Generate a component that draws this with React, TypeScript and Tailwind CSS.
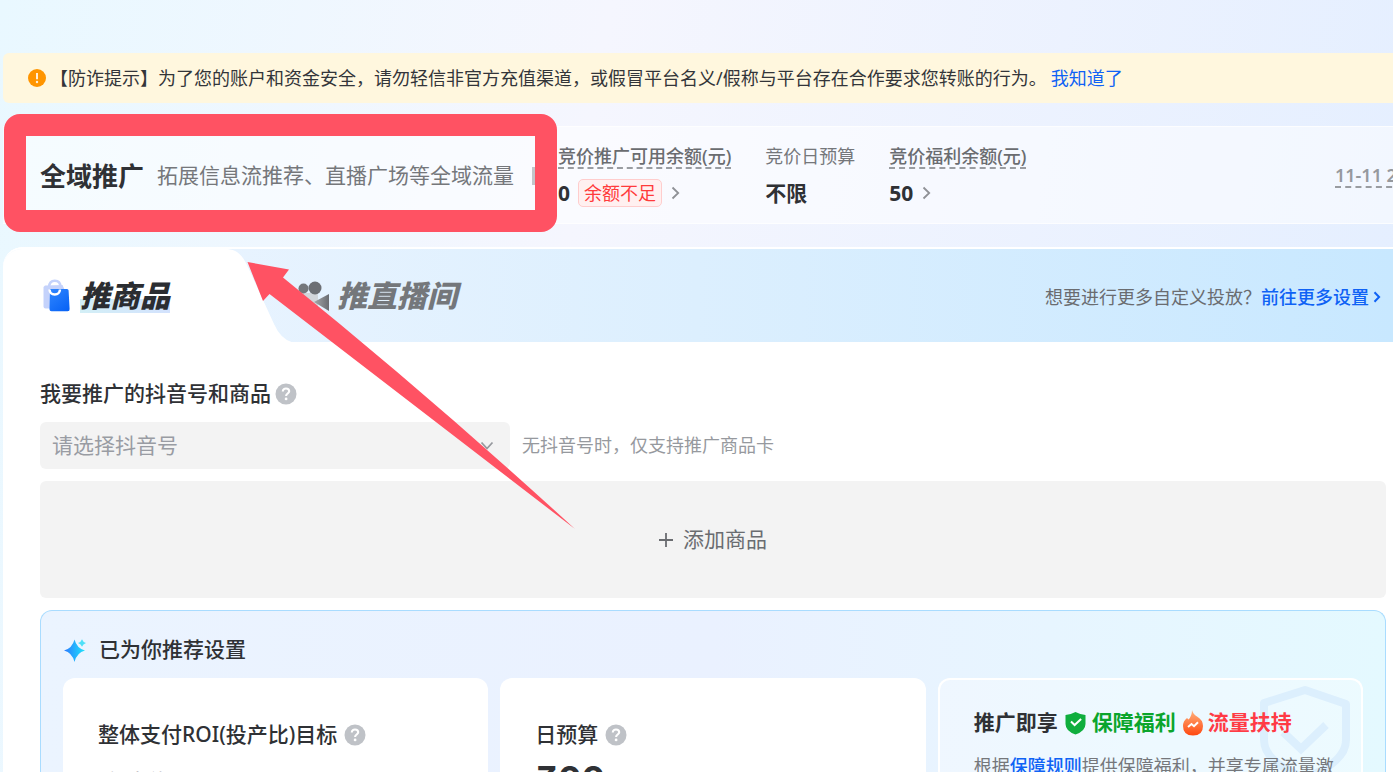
import React from 'react';

function HelpIcon({ label }: { label: string }) {
  return (
    <button type="button" aria-label={label} className="shrink-0">
      <svg width="22" height="22" viewBox="0 0 22 22" fill="none">
        <circle cx="11" cy="11" r="10.5" fill="#bfc2c7" />
        <path d="M7.8 8.6c0-1.9 1.4-3.1 3.2-3.1s3.2 1.1 3.2 2.8c0 2.1-3.1 2.3-3.1 4.6" stroke="#fff" strokeWidth="2.1" />
        <circle cx="11.1" cy="15.9" r="1.4" fill="#fff" />
      </svg>
    </button>
  );
}

function Chevron({ className }: { className?: string }) {
  return (
    <svg className={className} width="9" height="14" viewBox="0 0 9 14" fill="none">
      <path d="M1.5 1.5 7.2 7l-5.7 5.5" stroke="currentColor" strokeWidth="1.8" />
    </svg>
  );
}

function Notice() {
  return (
    <div role="alert" className="flex h-[50px] shrink-0 items-center whitespace-nowrap rounded-l-md bg-[#fff7de] pl-[25px] text-[18px] text-[#333539]">
      <svg className="mr-1 shrink-0" width="18" height="18" viewBox="0 0 18 18">
        <circle cx="9" cy="9" r="9" fill="#ff9500" />
        <path d="M9 4v6.2" stroke="#fff" strokeOpacity=".85" strokeWidth="2" />
        <circle cx="9" cy="13" r="1.2" fill="#fff" fillOpacity=".85" />
      </svg>
      <p>【防诈提示】为了您的账户和资金安全，请勿轻信非官方充值渠道，或假冒平台名义/假称与平台存在合作要求您转账的行为。</p>
      <button type="button" className="ml-1 text-[#0f62f5]">我知道了</button>
    </div>
  );
}

function Summary() {
  return (
    <header className="relative flex h-[98px] shrink-0 items-center whitespace-nowrap border-y border-white/70 bg-white/50 pl-[37px] pt-[2px]">
      <h1 className="text-[26px] font-bold text-[#2f3135]">全域推广</h1>
      <p className="ml-[13px] text-[21px] text-[#75777b]">拓展信息流推荐、直播广场等全域流量</p>
      <span className="ml-[18px] h-[18px] w-[3px] bg-[#c3c5c9]" />
      <dl className="ml-[23px] flex gap-[34px]">
        <div>
          <dt className="h-[24px] border-b-2 border-dashed border-[#999ca1] text-[18px] font-medium leading-[22px] text-[#6a6c70]">竞价推广可用余额(元)</dt>
          <dd className="mt-[10px] flex h-[28px] items-center text-[21px] font-bold leading-[28px] text-[#2f3135]">
            0
            <span className="ml-[8px] flex h-[28px] items-center rounded-[5px] border border-[#ffcdcd] bg-[#fff0f0] px-[5px] text-[18px] font-normal text-[#ff3b3b]">余额不足</span>
            <Chevron className="ml-[9px] text-[#8f9196]" />
          </dd>
        </div>
        <div>
          <dt className="h-[24px] text-[18px] leading-[22px] text-[#75777b]">竞价日预算</dt>
          <dd className="mt-[10px] h-[28px] text-[21px] font-bold leading-[28px] text-[#2f3135]">不限</dd>
        </div>
        <div>
          <dt className="h-[24px] border-b-2 border-dashed border-[#999ca1] text-[18px] font-medium leading-[22px] text-[#6a6c70]">竞价福利余额(元)</dt>
          <dd className="mt-[10px] flex h-[28px] items-center text-[21px] font-bold leading-[28px] text-[#2f3135]">
            50
            <Chevron className="ml-[9px] text-[#8f9196]" />
          </dd>
        </div>
      </dl>
      <div className="ml-auto w-[58px] shrink-0 overflow-hidden">
        <time className="block w-max border-b-2 border-dashed border-[#999ca1] text-[18px] font-semibold leading-[22px] text-[#96999e]">11-11 23:59</time>
      </div>
      <div className="absolute -top-[13px] left-px h-[118px] w-[553px] rounded-2xl border-[22px] border-[#ff5263]" />
    </header>
  );
}

function BagIcon() {
  return (
    <svg width="27" height="33" viewBox="0 0 27 33" fill="none">
      <defs>
        <linearGradient id="bag" x1="7" y1="10" x2="25" y2="32" gradientUnits="userSpaceOnUse">
          <stop stopColor="#2f86ff" />
          <stop offset="1" stopColor="#0762f5" />
        </linearGradient>
      </defs>
      <path d="M2 6.500 19.500 6l2 4.500L8 11v18.500H2.500A2 2 0 0 1 .5 27.500V8z" fill="#c4d2fb" />
      <path d="M6 8.500C6 4 8.300 1.800 11.800 1.800S17.500 4 17.500 8.500" stroke="#c4d2fb" strokeWidth="2.600" />
      <path d="M7 10h17a1.600 1.600 0 0 1 1.600 1.500l1 18.500a2 2 0 0 1-2 2.200H8.500a2 2 0 0 1-2-2z" fill="url(#bag)" />
      <path d="M6.500 10.500c.3 3.700 2.300 5 5.200 5s5-1.600 5.300-5" stroke="#fff" strokeWidth="2.500" />
    </svg>
  );
}

function CameraIcon() {
  return (
    <svg width="36" height="32" viewBox="0 0 36 32" fill="none">
      <defs>
        <linearGradient id="lens" x1="20" y1="0" x2="36" y2="0" gradientUnits="userSpaceOnUse">
          <stop stopColor="#a5a7aa" />
          <stop offset="1" stopColor="#66696e" />
        </linearGradient>
      </defs>
      <rect x="4" y="13" width="20" height="17" rx="3" fill="#d2d6db" />
      <circle cx="9.500" cy="8.500" r="5" fill="#74777b" />
      <circle cx="21" cy="8" r="6.500" fill="#6c6f74" />
      <path d="M20 22 35 14v17z" fill="url(#lens)" />
    </svg>
  );
}

function Tabs() {
  return (
    <div className="relative flex h-[95px] items-center overflow-hidden whitespace-nowrap rounded-tl-[20px] border-t-2 border-white bg-linear-to-r from-[#edf5ff] via-[#dceffe] to-[#c8e8ff]">
      <svg className="absolute left-0 top-0" width="300" height="94" viewBox="0 0 300 94">
        <path d="M0 0H222C234 0 239 6 244 16L271 75Q279 93 294 94H0Z" fill="#fff" />
      </svg>
      <div role="tablist" className="relative flex items-center pl-[40px]">
        <button type="button" role="tab" aria-selected="true" className="flex w-[251px] items-center gap-[10px]">
          <BagIcon />
          <span className="bg-linear-to-r from-[#d3eff6] to-[#d3e2fd] bg-[length:100%_14px] bg-bottom bg-no-repeat text-[30px] font-black italic leading-[34px] text-[#2b2d31]">推商品</span>
        </button>
        <button type="button" role="tab" aria-selected="false" className="flex items-center gap-[7px]">
          <CameraIcon />
          <span className="text-[30px] font-black italic leading-[34px] text-[#74777b]">推直播间</span>
        </button>
      </div>
      <p className="ml-auto flex items-center pr-[12px] pt-[3px] text-[18px] text-[#6a6c70]">
        想要进行更多自定义投放？
        <a href="#more" className="flex items-center font-medium text-[#0f62f5]">
          前往更多设置
          <svg className="ml-1" width="8" height="12" viewBox="0 0 8 12" fill="none">
            <path d="m1.500 1.200 4.600 4.800-4.600 4.800" stroke="currentColor" strokeWidth="2" />
          </svg>
        </a>
      </p>
    </div>
  );
}

function Sparkle() {
  return (
    <svg width="24" height="26" viewBox="0 0 24 26">
      <defs>
        <linearGradient id="spark" x1="2" y1="0" x2="22" y2="0" gradientUnits="userSpaceOnUse">
          <stop stopColor="#2a7fff" />
          <stop offset="1" stopColor="#1fe4fb" />
        </linearGradient>
      </defs>
      <path d="M11.500 2.500Q13.700 11.300 22 13.500 13.700 15.700 11.500 25 9.300 15.700 1 13.500 9.300 11.300 11.500 2.500Z" fill="url(#spark)" />
      <path d="M19 2.200Q19.900 5 23 6 19.900 7 19 9.800 18.100 7 15 6 18.100 5 19 2.200Z" fill="#4fe0f8" />
    </svg>
  );
}

function Benefits() {
  return (
    <section className="relative overflow-hidden rounded-t-xl border-2 border-b-0 border-white bg-white/30 pl-[34px] pr-6 pt-[29px]">
      <svg className="absolute right-[10px] top-[4px]" width="92" height="100" viewBox="0 0 92 100" fill="none">
        <path d="M5 19 46 6l41 14v36q0 22-41 38Q5 78 5 56Z" stroke="#dceffd" strokeWidth="8" strokeLinejoin="round" />
        <path d="m24 48 18 17 25-24" stroke="#dceffd" strokeWidth="8" />
      </svg>
      <h3 className="relative flex h-[28px] items-center whitespace-nowrap text-[21px] font-bold text-[#2f3135]">
        推广即享
        <svg className="ml-[7px] mr-[6px]" width="21" height="24" viewBox="0 0 21 24" fill="none">
          <path d="M10.500 1Q15 3.500 20.500 4v9q0 7-10 10.500Q.5 20 .5 13V4Q6 3.500 10.500 1Z" fill="#0fae3d" />
          <path d="m6 10.500 3.600 3.500 6.500-6" stroke="#fff" strokeWidth="2" />
        </svg>
        <span className="text-[#0ba52c]">保障福利</span>
        <svg className="ml-[7px] mr-[5px]" width="20" height="26" viewBox="0 0 20 26" fill="none">
          <defs>
            <linearGradient id="flame" x1="10" y1="1" x2="10" y2="25" gradientUnits="userSpaceOnUse">
              <stop stopColor="#ffb07a" />
              <stop offset="1" stopColor="#ff4a12" />
            </linearGradient>
          </defs>
          <path d="M9 0q1 4 5 6.500Q20 10 20 16q0 9.500-10 9.500T0 16q0-5 4-8l1.500 1.500Q9 6 9 0Z" fill="url(#flame)" />
          <path d="m5 17 3.500-3 2.500 2.200 4-4" stroke="#fff" strokeWidth="2" />
        </svg>
        <span className="text-[#ff3b45]">流量扶持</span>
      </h3>
      <p className="relative mt-[15px] text-[18px] leading-[28px] text-[#75777b]">
        根据<a href="#rules" className="font-medium text-[#0f62f5]">保障规则</a>提供保障福利，并享专属流量激励
      </p>
    </section>
  );
}

function Recommended() {
  return (
    <section className="mt-3 flex flex-1 flex-col rounded-t-xl border border-b-0 border-[#a9dcff] bg-linear-to-r from-[#ebf4ff] via-[#eaf1ff] to-[#e4f9ff] px-[22px] pt-[24px]">
      <h2 className="flex h-[30px] items-center gap-[12px] text-[21px] font-medium text-[#2f3135]">
        <Sparkle />
        已为你推荐设置
      </h2>
      <div className="mt-[13px] grid flex-1 grid-cols-3 gap-3">
        <section className="rounded-t-xl bg-white px-[35px] pt-[43px]">
          <h3 className="flex h-[28px] items-center gap-[7px] whitespace-nowrap text-[21px] font-medium text-[#2f3135]">
            整体支付ROI(投产比)目标
            <HelpIcon label="ROI目标说明" />
          </h3>
          <input aria-label="ROI目标" placeholder="保本约1" className="mt-[16px] block w-full bg-transparent px-[8px] text-[21px] leading-[32px] outline-none placeholder:text-[#8f9196]" />
        </section>
        <section className="rounded-t-xl bg-white px-[35px] pt-[43px]">
          <h3 className="flex h-[28px] items-center gap-[7px] text-[21px] font-medium text-[#2f3135]">
            日预算
            <HelpIcon label="日预算说明" />
          </h3>
          <p className="mt-[8px] font-[Inter] text-[35px] font-bold leading-[44px] text-[#2f3135] [font-feature-settings:'cv09']">300</p>
        </section>
        <Benefits />
      </div>
    </section>
  );
}

function Pointer() {
  return (
    <svg className="pointer-events-none absolute left-[243px] top-[14px]" width="332" height="272" viewBox="0 0 332 272">
      <path d="M1.500 1 43 8.500 37 16.500Q185 136 329 268L23.500 33 17 40Z" fill="#ff5263" />
    </svg>
  );
}

export default function App() {
  return (
    <div className="flex h-screen flex-col gap-[23px] overflow-hidden bg-linear-[100deg] from-[#e9f8ff] via-[#f5f6fe] via-40% to-[#e3eeff] pl-[3px] pt-[53px] font-['Noto_Sans','Noto_Sans_CJK_SC',sans-serif] text-[#2f3135]">
      <Notice />
      <Summary />
      <main className="relative flex flex-1 flex-col rounded-tl-[20px] bg-white">
        <Tabs />
        <div className="flex flex-1 flex-col pl-[37px] pr-[7px] pt-[36px]">
          <div className="flex h-[32px] items-center gap-[4px] text-[21px] font-medium">
            <label htmlFor="account">我要推广的抖音号和商品</label>
            <HelpIcon label="抖音号和商品说明" />
          </div>
          <div className="mt-3 flex items-center gap-3">
            <div className="relative w-[470px]">
              <select id="account" defaultValue="" className="h-[47px] w-full appearance-none rounded-md bg-[#f3f3f3] px-[12px] text-[21px] text-[#999ca3]">
                <option value="">请选择抖音号</option>
              </select>
              <svg className="pointer-events-none absolute right-4 top-[19px]" width="14" height="10" viewBox="0 0 14 10" fill="none">
                <path d="m1.500 1.500 5.500 6 5.500-6" stroke="#96999e" strokeWidth="1.800" />
              </svg>
            </div>
            <p className="text-[18px] text-[#96999e]">无抖音号时，仅支持推广商品卡</p>
          </div>
          <button type="button" className="mt-3 flex h-[117px] shrink-0 items-center justify-center gap-[10px] rounded-md bg-[#f3f3f3] text-[21px] text-[#6a6c70]">
            <svg width="14" height="14" viewBox="0 0 14 14">
              <path d="M7 0v14M0 7h14" stroke="currentColor" strokeWidth="1.800" />
            </svg>
            添加商品
          </button>
          <Recommended />
        </div>
        <Pointer />
      </main>
    </div>
  );
}
